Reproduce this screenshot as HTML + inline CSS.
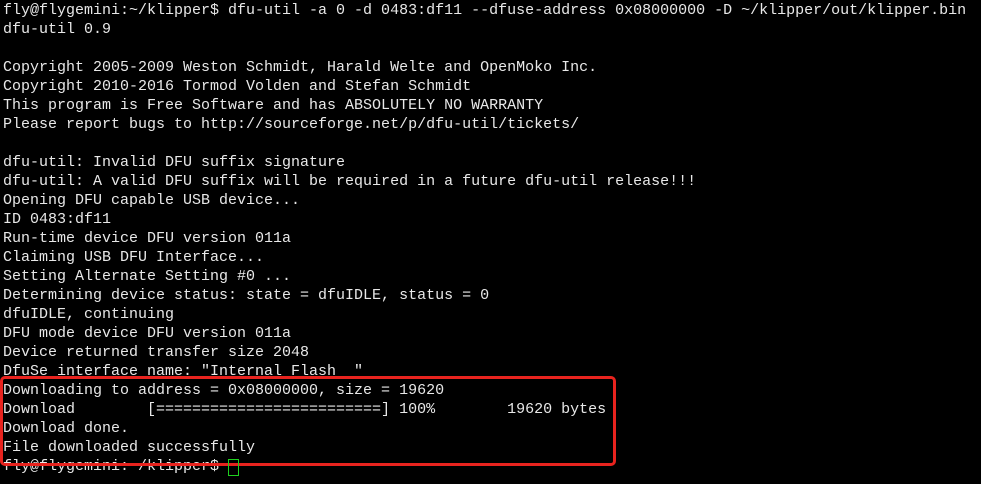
<!DOCTYPE html>
<html><head><style>
html,body{margin:0;padding:0;background:#000;width:981px;height:484px;overflow:hidden}
pre{margin:0;position:absolute;left:3px;top:1px;font-family:"Liberation Mono",monospace;font-size:15px;line-height:19px;color:#e8e8e8}
.box{position:absolute;left:0;top:376px;width:610px;height:84px;border:3px solid #e8231e;border-radius:5px}
.cur{position:absolute;left:228px;top:459px;width:9px;height:15px;border:1px solid #1fd11f}
</style></head><body>
<pre>fly@flygemini:~/klipper$ dfu-util -a 0 -d 0483:df11 --dfuse-address 0x08000000 -D ~/klipper/out/klipper.bin
dfu-util 0.9

Copyright 2005-2009 Weston Schmidt, Harald Welte and OpenMoko Inc.
Copyright 2010-2016 Tormod Volden and Stefan Schmidt
This program is Free Software and has ABSOLUTELY NO WARRANTY
Please report bugs to http://sourceforge.net/p/dfu-util/tickets/

dfu-util: Invalid DFU suffix signature
dfu-util: A valid DFU suffix will be required in a future dfu-util release!!!
Opening DFU capable USB device...
ID 0483:df11
Run-time device DFU version 011a
Claiming USB DFU Interface...
Setting Alternate Setting #0 ...
Determining device status: state = dfuIDLE, status = 0
dfuIDLE, continuing
DFU mode device DFU version 011a
Device returned transfer size 2048
DfuSe interface name: "Internal Flash  "
Downloading to address = 0x08000000, size = 19620
Download        [=========================] 100%        19620 bytes
Download done.
File downloaded successfully
fly@flygemini:~/klipper$ </pre>
<div class="box"></div>
<div class="cur"></div>
</body></html>
